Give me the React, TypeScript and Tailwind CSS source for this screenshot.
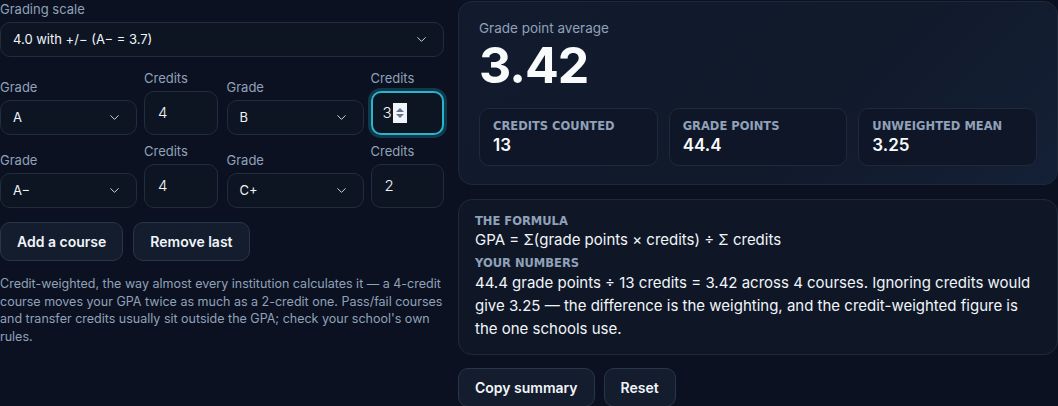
import React, { useState } from 'react';
import { ChevronDown } from 'lucide-react';

type Course = { grade: string; credits: number };

const SCALE: Record<string, number> = {
  'A': 4.0, 'A−': 3.7, 'B+': 3.3, 'B': 3.0, 'B−': 2.7, 'C+': 2.3, 'C': 2.0, 'D': 1.0, 'F': 0,
};

const SelectBox: React.FC<{ value: string; className?: string }> = ({ value, className }) => (
  <div className={`flex items-center justify-between rounded-[10px] border border-[#222c3d] bg-[#0d1422] pl-[12px] pr-[14px] text-[13px] text-slate-100 ${className ?? ''}`}>
    <span>{value}</span>
    <ChevronDown size={15} strokeWidth={1.6} className="text-slate-300" />
  </div>
);

const CreditField: React.FC<{ value: number; focused?: boolean }> = ({ value, focused }) => (
  <div
    className={`relative flex h-[44px] items-center rounded-[10px] bg-[#0d1422] text-[15px] font-light text-slate-100 ${
      focused
        ? 'border-2 border-[#2bb3c9] pl-[10px] shadow-[0_0_0_3px_rgba(34,160,190,0.28)]'
        : 'border border-[#222c3d] pl-[13px]'
    }`}
  >
    <span>{value}</span>
    {focused && (
      <span className="ml-px flex h-[20px] w-[14px] flex-col items-center justify-center gap-[2px] bg-slate-100">
        <span className="h-0 w-0 border-x-[4px] border-b-[4px] border-x-transparent border-b-slate-500" />
        <span className="h-0 w-0 border-x-[4px] border-t-[4px] border-x-transparent border-t-slate-500" />
      </span>
    )}
  </div>
);

const CourseCell: React.FC<{ course: Course; focused?: boolean }> = ({ course, focused }) => (
  <div className="grid grid-cols-[137px_1fr] items-end gap-[7px]">
    <div className="flex flex-col gap-[4px]">
      <span className="text-[13px] leading-[18px] text-slate-400">Grade</span>
      <SelectBox value={course.grade} className="h-[35px]" />
    </div>
    <div className="flex flex-col gap-[4px]">
      <span className="text-[13px] leading-[18px] text-slate-400">Credits</span>
      <CreditField value={course.credits} focused={focused} />
    </div>
  </div>
);

const Stat: React.FC<{ label: string; value: string }> = ({ label, value }) => (
  <div className="flex h-[58px] flex-col justify-center rounded-[10px] border border-[#1f293a] bg-[#0f1627] px-[13px]">
    <span className="font-['DejaVu_Sans',sans-serif] text-[11.5px] font-bold uppercase leading-[16px] text-slate-400">
      {label}
    </span>
    <span className="text-[17px] font-semibold leading-[22px] text-slate-50">{value}</span>
  </div>
);

const Btn: React.FC<{ children: React.ReactNode }> = ({ children }) => (
  <button className="h-[39px] rounded-[10px] border border-[#2a3547] bg-[#141d2d] px-[16px] text-[14px] font-semibold text-slate-100">
    {children}
  </button>
);

export default function App() {
  const [courses] = useState<Course[]>([
    { grade: 'A', credits: 4 },
    { grade: 'B', credits: 3 },
    { grade: 'A−', credits: 4 },
    { grade: 'C+', credits: 2 },
  ]);

  const credits = courses.reduce((s, c) => s + c.credits, 0);
  const points = courses.reduce((s, c) => s + SCALE[c.grade] * c.credits, 0);
  const gpa = points / credits;
  const mean = courses.reduce((s, c) => s + SCALE[c.grade], 0) / courses.length;

  const numbers = `${points.toFixed(1)} grade points ÷ ${credits} credits = ${gpa.toFixed(2)} across ${courses.length} courses. Ignoring credits would give ${mean.toFixed(2)} — the difference is the weighting, and the credit-weighted figure is the one schools use.`;

  return (
    <div className="min-h-screen overflow-hidden bg-[#0b1120] font-['Inter',sans-serif] text-slate-100">
      <div className="grid grid-cols-[444px_1fr] gap-[14px]">
        {/* left: inputs */}
        <div className="flex flex-col">
          <span className="text-[13px] leading-[18px] text-slate-400">Grading scale</span>
          <SelectBox value="4.0 with +/− (A− = 3.7)" className="mt-[4px] h-[35px]" />

          <div className="mt-[12px] grid grid-cols-2 gap-x-[9px] gap-y-[7px]">
            {courses.map((c, i) => (
              <CourseCell key={i} course={c} focused={i === 1} />
            ))}
          </div>

          <div className="mt-[14px] flex gap-[10px]">
            <Btn>Add a course</Btn>
            <Btn>Remove last</Btn>
          </div>

          <p className="mt-[14px] text-[12.5px] leading-[17.5px] text-slate-400">
            Credit-weighted, the way almost every institution calculates it — a 4-credit course moves your GPA twice as
            much as a 2-credit one. Pass/fail courses and transfer credits usually sit outside the GPA; check your
            school's own rules.
          </p>
        </div>

        {/* right: results */}
        <div className="flex flex-col pt-px">
          <div className="rounded-[14px] border border-[#1f293a] bg-[linear-gradient(135deg,#121b2d,#111a2b_60%,#142036)] px-[20px] pb-[18px] pt-[16px]">
            <div className="text-[13.5px] leading-[20px] text-slate-400">Grade point average</div>
            <div className="-mt-px text-[50px] font-bold leading-[56px] tracking-[-0.02em] text-slate-50">
              {gpa.toFixed(2)}
            </div>
            <div className="mt-[15px] grid grid-cols-3 gap-[11px]">
              <Stat label="Credits counted" value={String(credits)} />
              <Stat label="Grade points" value={points.toFixed(1)} />
              <Stat label="Unweighted mean" value={mean.toFixed(2)} />
            </div>
          </div>

          <div className="mt-[14px] rounded-[14px] border border-[#1f293a] bg-[#0f1727] px-[16px] pb-[14px] pt-[13px]">
            <div className="font-['DejaVu_Sans',sans-serif] text-[11.5px] font-bold uppercase leading-[16px] text-slate-400">
              The formula
            </div>
            <div className="text-[15px] leading-[22px] text-slate-100">GPA = Σ(grade points × credits) ÷ Σ credits</div>
            <div className="mt-[4px] font-['DejaVu_Sans',sans-serif] text-[11.5px] font-bold uppercase leading-[16px] text-slate-400">
              Your numbers
            </div>
            <p className="text-[15px] leading-[23px] text-slate-100">{numbers}</p>
          </div>

          <div className="mt-[13px] flex gap-[9px]">
            <Btn>Copy summary</Btn>
            <Btn>Reset</Btn>
          </div>
        </div>
      </div>
    </div>
  );
}
